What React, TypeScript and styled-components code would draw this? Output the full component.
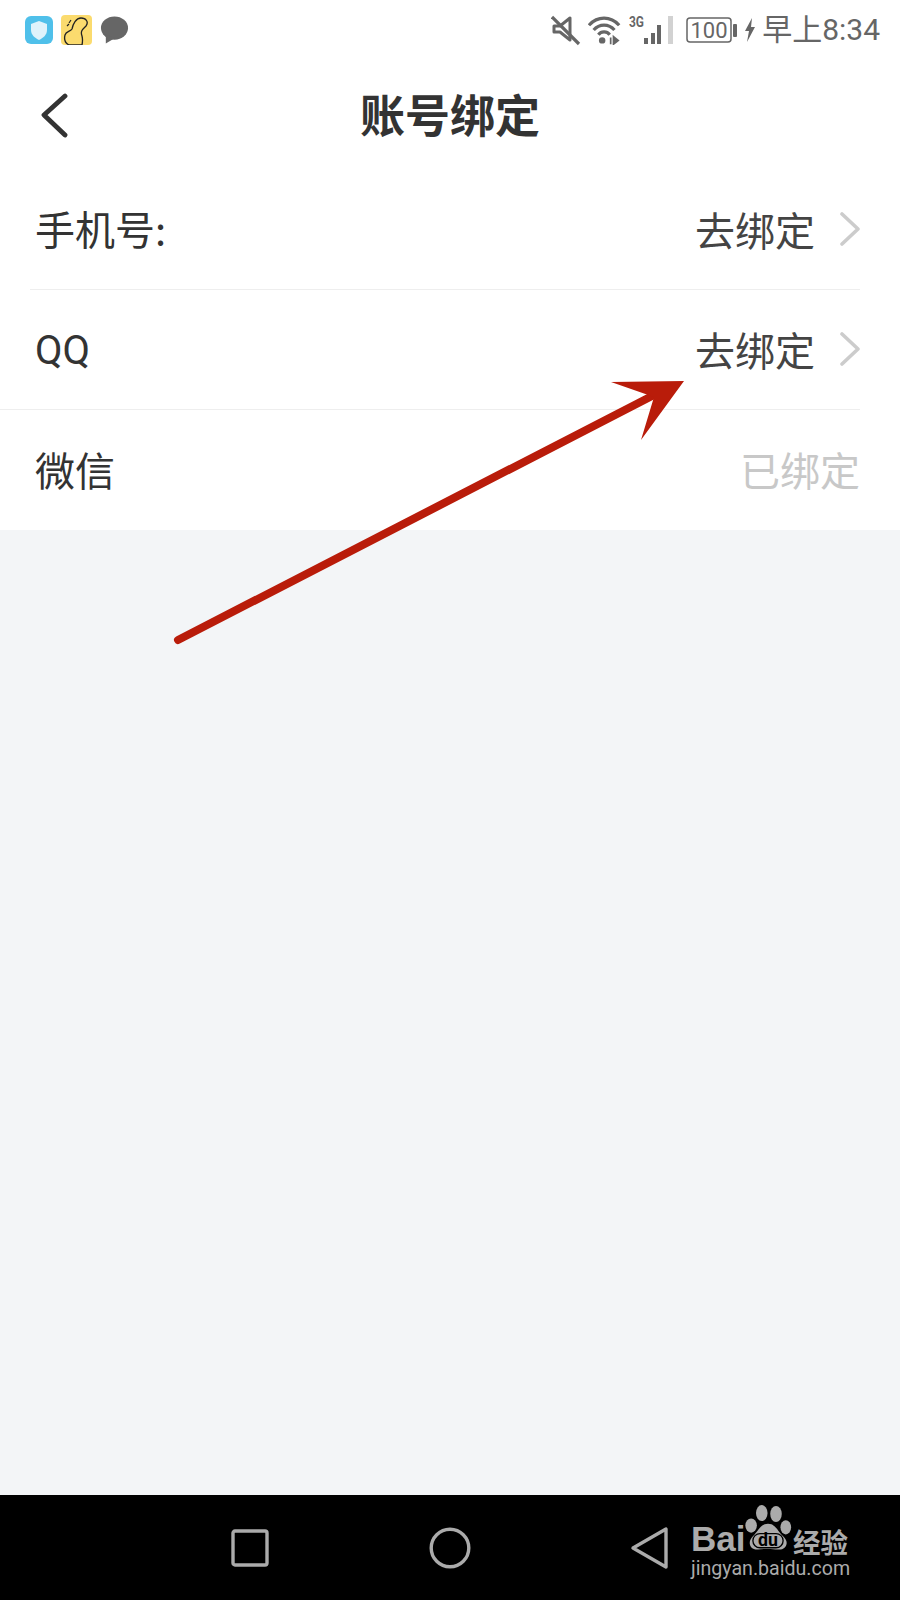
import React from "react";
import styled, { createGlobalStyle } from "styled-components";

const Global = createGlobalStyle`
  html, body { margin: 0; padding: 0; background: #f3f5f7; }
  * { box-sizing: border-box; }
`;
const CJK = `"Noto Sans CJK SC", Roboto, sans-serif`;

const Screen = styled.div`
  position: relative;
  width: 900px;
  height: 1600px;
  display: flex;
  flex-direction: column;
  overflow: hidden;
  background: #f3f5f7;
  font-family: Roboto, ${CJK};
`;
const StatusBar = styled.div`
  height: 60px;
  background: #fff;
  display: flex;
  align-items: center;
  justify-content: space-between;
  padding: 0 20px 0 25px;
`;
const StatusGroup = styled.div`
  display: flex;
  align-items: center;
  gap: ${(p: { $gap: number }) => p.$gap}px;
`;
const Time = styled.span`
  font-size: 30px;
  color: #666;
  line-height: 36px;
  white-space: nowrap;
  font-family: Roboto, ${CJK};
`;
const Header = styled.header`
  position: relative;
  height: 110px;
  background: #fff;
  display: flex;
  align-items: center;
  justify-content: center;
`;
const BackIcon = styled.svg`
  position: absolute;
  left: 39px;
  top: 30px;
`;
const Title = styled.h1`
  margin: 0 0 4px;
  font-size: 45px;
  font-weight: 700;
  color: #333;
  font-family: ${CJK};
`;
const List = styled.div`
  background: #fff;
  display: flex;
  flex-direction: column;
`;
const Row = styled.div<{ $divider?: "inset" | "full" }>`
  height: 120px;
  margin-left: ${(p) => (p.$divider === "inset" ? "30px" : "0")};
  margin-right: ${(p) => (p.$divider ? "40px" : "0")};
  padding: 0 ${(p) => (p.$divider ? "0" : "40px")} 0
    ${(p) => (p.$divider === "inset" ? "5px" : "35px")};
  display: flex;
  align-items: center;
  justify-content: space-between;
  border-bottom: ${(p) => (p.$divider ? "1px solid #eeeeee" : "none")};
`;
const Label = styled.span`
  font-size: 40px;
  color: #333;
  margin-bottom: 3px;
  font-family: ${CJK};
`;
const LatinLabel = styled.span`
  font-size: 40px;
  color: #333;
  margin-top: 2px;
  font-family: Roboto, sans-serif;
`;
const Action = styled.span`
  display: flex;
  align-items: center;
  gap: 23px;
  font-size: 40px;
  color: #444;
  margin-bottom: 1px;
  font-family: ${CJK};
`;
const Bound = styled.span`
  font-size: 40px;
  color: #c8c8c8;
  margin-bottom: 2px;
  font-family: ${CJK};
`;
const Fill = styled.div`
  flex: 1;
  background: #f3f5f7;
`;
const NavBar = styled.nav`
  height: 105px;
  background: #000;
  display: flex;
  align-items: center;
  gap: 159px;
  padding: 0 0 0 230px;
`;
const Overlay = styled.svg`
  position: absolute;
  left: 0;
  top: 0;
  pointer-events: none;
`;
const Watermark = styled.div`
  position: absolute;
  left: 690px;
  top: 1504px;
  width: 170px;
  height: 80px;
  color: #ababab;
`;
const Bai = styled.span`
  position: absolute;
  left: 1px;
  top: 14px;
  font-size: 35px;
  line-height: 42px;
  font-weight: 700;
  font-family: "Liberation Sans", Arial, sans-serif;
`;
const Jing = styled.span`
  position: absolute;
  left: 103px;
  top: 21px;
  font-size: 27.5px;
  line-height: 32px;
  font-weight: 700;
  font-family: ${CJK};
`;
const Domain = styled.span`
  position: absolute;
  left: 1px;
  top: 52px;
  font-size: 19.6px;
  line-height: 26px;
  white-space: nowrap;
  font-family: Roboto, sans-serif;
`;
const PawIcon = styled.svg`
  position: absolute;
  left: 54px;
  top: 1px;
`;

const Chevron = () => (
  <svg width="22" height="36" viewBox="0 0 22 36" fill="none">
    <path d="M4 3 L20 18 L4 33" stroke="#cccccc" strokeWidth="3.6" strokeLinecap="round" strokeLinejoin="round" />
  </svg>
);

export default function App() {
  return (
    <Screen>
      <Global />
      <StatusBar>
        <StatusGroup $gap={8}>
          <svg width="28" height="28" viewBox="0 0 28 28">
            <rect width="28" height="28" rx="6" fill="#4fc0ea" />
            <path d="M14 5 L22 8 V14 C22 19 18 22 14 24 C10 22 6 19 6 14 V8 Z" fill="#dff3fb" />
          </svg>
          <svg width="31" height="30" viewBox="0 0 31 30">
            <rect width="31" height="30" rx="4" fill="#fbdb6e" />
            <path d="M4 20 C5 16 9 17 11 14 C12 9 15 3 20 3 C25 3 28 7 25 11 C22 14 19 16 21 21 C22 25 21 30 21 30 L8 30 C4 28 3 24 4 20 Z" fill="#fbdb6e" stroke="#222" strokeWidth="1.3" />
            <path d="M8 8 L10 5 M6 11 L8 9" stroke="#222" strokeWidth="1.2" />
          </svg>
          <svg width="29" height="28" viewBox="0 0 30 28">
            <ellipse cx="15" cy="12" rx="14" ry="12" fill="#666" />
            <path d="M6 19 L6 28 L16 22 Z" fill="#666" />
          </svg>
        </StatusGroup>
        <StatusGroup $gap={6}>
          <svg width="30" height="32" viewBox="0 0 30 32" fill="none" style={{ marginRight: 1 }}>
            <path d="M3 12 H9 L19 4 V26 L9 18 H3 Z" stroke="#666" strokeWidth="3" strokeLinejoin="round" fill="none" />
            <path d="M1 3 L28 30" stroke="#666" strokeWidth="3.2" />
          </svg>
          <svg width="34" height="30" viewBox="0 0 36 30" fill="none" style={{ marginRight: 1 }}>
            <path d="M1 10 C10 0 24 0 33 10" stroke="#666" strokeWidth="3.4" />
            <path d="M6 15 C12 8 22 8 28 15" stroke="#666" strokeWidth="3.4" />
            <path d="M11 20 C14 16 20 16 23 20" stroke="#666" strokeWidth="3.4" />
            <circle cx="15" cy="26" r="3.4" fill="#666" />
            <path d="M24 23 L24 30 M27 22 L32 26 L27 30 Z" stroke="#666" strokeWidth="1.8" fill="#666" />
          </svg>
          <svg width="45" height="32" viewBox="0 0 45 32">
            <text x="0" y="13" fontSize="14" fontWeight="700" fill="#666" fontFamily="Roboto, sans-serif" textLength="15" lengthAdjust="spacingAndGlyphs">3G</text>
            <rect x="15" y="24" width="4" height="6" fill="#666" />
            <rect x="22" y="19" width="4" height="11" fill="#666" />
            <rect x="28" y="11" width="4" height="19" fill="#666" />
            <rect x="39" y="2" width="5" height="28" fill="#d2d2d2" />
          </svg>
          <svg width="52" height="26" viewBox="0 0 52 26" style={{ marginLeft: 6 }}>
            <rect x="1" y="1" width="44" height="24" rx="3" fill="none" stroke="#666" strokeWidth="1.5" />
            <text x="23" y="21" textAnchor="middle" fontSize="22" fill="#666" fontFamily="Roboto, sans-serif">100</text>
            <rect x="47" y="7" width="4" height="13" rx="1" fill="#666" />
          </svg>
          <svg width="12" height="24" viewBox="0 0 12 24">
            <path d="M8 0 L1 13 H5 L3 24 L11 9 H7 Z" fill="#666" />
          </svg>
          <Time>早上8:34</Time>
        </StatusGroup>
      </StatusBar>
      <Header>
        <BackIcon width="30" height="48" viewBox="0 0 30 48" fill="none">
          <path d="M26 6 L5 25 L26 45" stroke="#333" strokeWidth="4.8" strokeLinecap="round" strokeLinejoin="round" />
        </BackIcon>
        <Title>账号绑定</Title>
      </Header>
      <List>
        <Row $divider="inset">
          <Label>手机号:</Label>
          <Action>
            去绑定
            <Chevron />
          </Action>
        </Row>
        <Row $divider="full">
          <LatinLabel>QQ</LatinLabel>
          <Action>
            去绑定
            <Chevron />
          </Action>
        </Row>
        <Row>
          <Label>微信</Label>
          <Bound>已绑定</Bound>
        </Row>
      </List>
      <Fill />
      <NavBar>
        <svg width="40" height="40" viewBox="0 0 40 40" fill="none">
          <rect x="3" y="3" width="34" height="34" rx="2" stroke="#ababab" strokeWidth="3.4" />
        </svg>
        <svg width="42" height="42" viewBox="0 0 42 42" fill="none">
          <circle cx="21" cy="21" r="18.8" stroke="#ababab" strokeWidth="3.4" />
        </svg>
        <svg width="40" height="44" viewBox="0 0 40 44" fill="none">
          <path d="M36 3 V41 L3 22 Z" stroke="#ababab" strokeWidth="3.4" strokeLinejoin="round" />
        </svg>
      </NavBar>
      <Overlay width="900" height="1600" viewBox="0 0 900 1600">
        <path d="M178 640 L652 396" stroke="#b91c0a" strokeWidth="8" strokeLinecap="round" fill="none" />
        <path d="M684 381 L611 382 L654 397 L641 440 Z" fill="#b91c0a" />
      </Overlay>
      <Watermark>
        <Bai>Bai</Bai>
        <PawIcon width="48" height="50" viewBox="0 0 54 56">
          <ellipse cx="20" cy="9" rx="6.5" ry="9" fill="#ababab" />
          <ellipse cx="36" cy="10" rx="6.5" ry="9" fill="#ababab" />
          <ellipse cx="8" cy="23" rx="6.5" ry="8" fill="#ababab" />
          <ellipse cx="47" cy="25" rx="6" ry="8" fill="#ababab" />
          <path d="M27 21 C36 21 38 30 44 35 C52 42 47 51 38 50 C32 49 22 49 16 50 C7 51 3 42 10 35 C16 30 18 21 27 21 Z" fill="#ababab" />
          <rect x="10" y="32" width="34" height="16" rx="8" fill="none" stroke="#000" strokeWidth="1.5" />
          <text x="27" y="46" textAnchor="middle" fontSize="20" fontWeight="700" fill="#000" fontFamily="Roboto, sans-serif">du</text>
        </PawIcon>
        <Jing>经验</Jing>
        <Domain>jingyan.baidu.com</Domain>
      </Watermark>
    </Screen>
  );
}
